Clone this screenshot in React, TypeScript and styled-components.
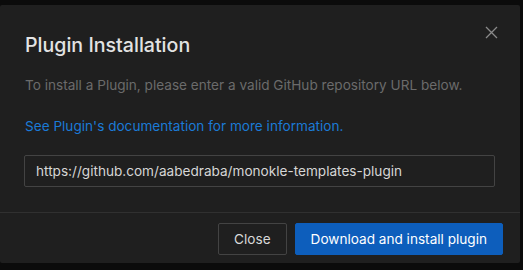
import React from "react";
import styled, { createGlobalStyle } from "styled-components";

const GlobalStyle = createGlobalStyle`
  html, body {
    margin: 0;
    padding: 0;
    background: #0b0b0b;
    font-family: Inter, "Noto Sans", sans-serif;
  }
`;

const StyledPage = styled.div`
  width: 523px;
  height: 270px;
  padding-top: 5px;
  box-sizing: border-box;
`;

const StyledModal = styled.div`
  position: relative;
  width: 520px;
  height: 258px;
  background: #1f1f1f;
  border-radius: 2px;
  display: flex;
  flex-direction: column;
`;

const StyledCloseIcon = styled.button`
  position: absolute;
  top: 21px;
  right: 22px;
  width: 13px;
  height: 13px;
  padding: 0;
  border: none;
  background: none;
  color: #8a8a8a;
  display: flex;
  cursor: pointer;
`;

const StyledBody = styled.div`
  flex: 1;
  padding: 26px 25px 0 24px;
  display: flex;
  flex-direction: column;
`;

const StyledTitle = styled.h2`
  margin: 0;
  font-size: 19.6px;
  line-height: 28px;
  font-weight: 500;
  color: #e3e3e3;
  padding-left: 1px;
`;

const StyledText = styled.p`
  margin: 15px 0 0;
  padding-left: 1px;
  font-size: 13.6px;
  line-height: 22px;
  color: #6b6b6b;
`;

const StyledLink = styled.a`
  margin-top: 19px;
  padding-left: 1px;
  font-size: 13.6px;
  line-height: 22px;
  color: #1b7ad6;
  text-decoration: none;
`;

const StyledInput = styled.input`
  margin-top: 18px;
  height: 32px;
  box-sizing: border-box;
  width: 471px;
  background: transparent;
  border: 1px solid #434343;
  border-radius: 2px;
  padding: 0 11px;
  font-family: inherit;
  font-size: 13.6px;
  color: #d6d6d6;
  outline: none;
`;

const StyledFooter = styled.div`
  height: 51px;
  box-sizing: border-box;
  border-top: 1px solid #303030;
  padding: 10px 17px 0 0;
  display: flex;
  justify-content: flex-end;
  gap: 8px;
`;

const StyledButton = styled.button<{ primary?: boolean }>`
  height: 32px;
  padding: 0 15px;
  border-radius: 2px;
  font-family: inherit;
  font-size: 13.6px;
  cursor: pointer;
  border: 1px solid ${(p) => (p.primary ? "#0d5ebc" : "#434343")};
  background: ${(p) => (p.primary ? "#0d5ebc" : "transparent")};
  color: ${(p) => (p.primary ? "#ffffff" : "#d9d9d9")};
`;

const App = () => {
  return (
    <StyledPage>
      <GlobalStyle />
      <StyledModal>
        <StyledCloseIcon aria-label="Close">
          <svg width="13" height="13" viewBox="0 0 13 13">
            <path d="M1 1L12 12M12 1L1 12" stroke="currentColor" strokeWidth="1.3" />
          </svg>
        </StyledCloseIcon>
        <StyledBody>
          <StyledTitle>Plugin Installation</StyledTitle>
          <StyledText>
            To install a Plugin, please enter a valid GitHub repository URL below.
          </StyledText>
          <StyledLink href="#">See Plugin's documentation for more information.</StyledLink>
          <StyledInput defaultValue="https://github.com/aabedraba/monokle-templates-plugin" />
        </StyledBody>
        <StyledFooter>
          <StyledButton>Close</StyledButton>
          <StyledButton primary>Download and install plugin</StyledButton>
        </StyledFooter>
      </StyledModal>
    </StyledPage>
  );
};
export default App;
